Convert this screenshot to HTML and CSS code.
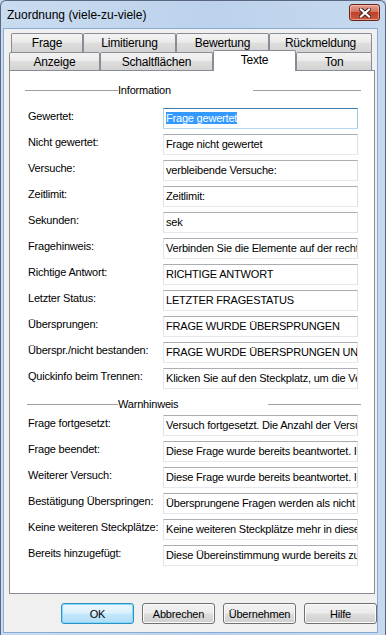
FILE: index.html
```html
<!DOCTYPE html>
<html lang="de">
<head>
<meta charset="UTF-8" />
<title>Zuordnung (viele-zu-viele)</title>
<link rel="stylesheet" href="styles.css">
</head>
<body>

<div class="window">
  <div class="titlebar">
    <span class="title">Zuordnung (viele-zu-viele)</span>
    <button class="close" aria-label="Schließen">
      <svg width="12" height="10" viewBox="0 0 12 10">
        <path d="M2 1.5 L10 8.5 M10 1.5 L2 8.5" stroke="#40201a" stroke-width="4" stroke-linecap="square" fill="none" />
        <path d="M2 1.5 L10 8.5 M10 1.5 L2 8.5" stroke="#fff" stroke-width="2.2" stroke-linecap="square" fill="none" />
      </svg>
    </button>
  </div>

  <div class="client">
    <div class="tabs">
      <div class="tab-row back">
        <div class="tab t-frage">Frage</div>
        <div class="tab t-limit">Limitierung</div>
        <div class="tab t-bewert">Bewertung</div>
        <div class="tab t-rueck">Rückmeldung</div>
      </div>
      <div class="tab-row front">
        <div class="tab t-anzeige">Anzeige</div>
        <div class="tab t-schalt">Schaltflächen</div>
        <div class="tab t-texte active">Texte</div>
        <div class="tab t-ton">Ton</div>
      </div>
    </div>

    <div class="panel">
      <div class="group-head info">
        <span class="rule lead"></span>
        <span class="caption">Information</span>
        <span class="rule"></span>
      </div>
      <div class="rows first">
        <div class="row"><span class="label">Gewertet:</span><div class="field focused"><span class="sel">Frage gewertet</span></div></div>
        <div class="row"><span class="label">Nicht gewertet:</span><div class="field">Frage nicht gewertet</div></div>
        <div class="row"><span class="label">Versuche:</span><div class="field">verbleibende Versuche:</div></div>
        <div class="row"><span class="label">Zeitlimit:</span><div class="field">Zeitlimit:</div></div>
        <div class="row"><span class="label">Sekunden:</span><div class="field">sek</div></div>
        <div class="row"><span class="label">Fragehinweis:</span><div class="field">Verbinden Sie die Elemente auf der rechten Seite</div></div>
        <div class="row"><span class="label">Richtige Antwort:</span><div class="field">RICHTIGE ANTWORT</div></div>
        <div class="row"><span class="label">Letzter Status:</span><div class="field">LETZTER FRAGESTATUS</div></div>
        <div class="row"><span class="label">Übersprungen:</span><div class="field">FRAGE WURDE ÜBERSPRUNGEN</div></div>
        <div class="row"><span class="label">Überspr./nicht bestanden:</span><div class="field">FRAGE WURDE ÜBERSPRUNGEN UND NICHT BESTANDEN</div></div>
        <div class="row"><span class="label">Quickinfo beim Trennen:</span><div class="field">Klicken Sie auf den Steckplatz, um die Verbindung zu trennen</div></div>
      </div>

      <div class="group-head warn">
        <span class="rule lead"></span>
        <span class="caption">Warnhinweis</span>
        <span class="rule"></span>
      </div>
      <div class="rows second">
        <div class="row"><span class="label">Frage fortgesetzt:</span><div class="field">Versuch fortgesetzt. Die Anzahl der Versuche</div></div>
        <div class="row"><span class="label">Frage beendet:</span><div class="field">Diese Frage wurde bereits beantwortet. Ihre</div></div>
        <div class="row"><span class="label">Weiterer Versuch:</span><div class="field">Diese Frage wurde bereits beantwortet. Ihre</div></div>
        <div class="row"><span class="label">Bestätigung Überspringen:</span><div class="field">Übersprungene Fragen werden als nicht beantwortet</div></div>
        <div class="row"><span class="label">Keine weiteren Steckplätze:</span><div class="field">Keine weiteren Steckplätze mehr in dieser Frage</div></div>
        <div class="row"><span class="label">Bereits hinzugefügt:</span><div class="field">Diese Übereinstimmung wurde bereits zugeordnet</div></div>
      </div>
    </div>

    <div class="buttons">
      <button class="btn default">OK</button>
      <button class="btn">Abbrechen</button>
      <button class="btn">Übernehmen</button>
      <button class="btn">Hilfe</button>
    </div>
  </div>
</div>

</body>
</html>
```

FILE: styles.css
```css
body {
  margin: 0;
  background: #c4d8ee;
  font-family: 'Liberation Sans', Arial, sans-serif;
  font-size: 11px;
  color: #000;
}
.window {
  width: 386px;
  height: 635px;
  box-sizing: border-box;
  border: 1px solid #59687e;
  border-bottom: none;
  border-radius: 6px 6px 0 0;
  padding: 0 7px 2px 2px;
  background: linear-gradient(to right, #c9dbef, #bcd2ec 55%, #c6d9ee);
  display: flex;
  flex-direction: column;
}
.titlebar {
  height: 27px;
  display: flex;
  align-items: center;
  padding-left: 4px;
}
.title {
  font-size: 12px;
}
.close {
  margin: 3px -2px 0 auto;
  align-self: flex-start;
  width: 31px;
  height: 17px;
  padding: 0;
  border: 1px solid #6a2417;
  border-radius: 3px;
  background: linear-gradient(#e5a293, #d4725f 45%, #c0402a 50%, #c95a3f);
  box-shadow: inset 0 0 0 1px rgba(255, 220, 210, 0.5);
  display: flex;
  align-items: center;
  justify-content: center;
}
.close svg {
  display: block;
}

.client {
  flex: 1;
  background: #f0f0f0;
  border: 1px solid #86abd6;
  padding: 4px 0 0 5px;
  display: flex;
  flex-direction: column;
}

/* tabs */
.tab-row {
  display: flex;
  align-items: flex-start;
}
.tab-row.back {
  margin-left: 2px;
}
.tab-row.front {
  margin-top: -2px;
}
.tab {
  box-sizing: border-box;
  border: 1px solid #898c95;
  border-bottom: none;
  border-radius: 2px 2px 0 0;
  background: linear-gradient(#f3f3f3, #ebebeb 45%, #dedede 50%, #d3d3d3);
  display: flex;
  align-items: center;
  justify-content: center;
  font-size: 12px;
  letter-spacing: -0.2px;
  height: 19px;
}
.tab-row.front .tab {
  height: 18px;
  margin-top: 2px;
}
.tab-row.front .tab.active {
  position: relative;
  z-index: 1;
  margin-top: 0;
  height: 21px;
  padding-bottom: 2px;
  background: #fff;
}
.t-frage { width: 72px; }
.t-limit { width: 93px; }
.t-bewert { width: 93px; }
.t-rueck { width: 103px; }
.t-anzeige { width: 91px; }
.t-schalt { width: 113px; }
.t-texte { width: 83px; }
.t-ton { width: 76px; }

/* panel */
.panel {
  width: 366px;
  height: 524px;
  box-sizing: border-box;
  margin-top: -1px;
  border: 1px solid #898c95;
  background: #fff;
  padding: 13px 16px 0 18px;
  letter-spacing: -0.2px;
}
.group-head {
  display: flex;
  align-items: center;
  height: 13px;
  margin: 0 -3px;
}
.group-head .caption {
  line-height: 13px;
}
.rule {
  height: 1px;
  flex: 1;
  background: #a0a0a0;
}
.info .lead { flex: none; width: 93px; }
.info .caption { width: 135px; }
.warn { margin-left: -1px; }
.warn .lead { flex: none; width: 91px; }
.warn .caption { width: 150px; }

.rows {
  display: flex;
  flex-direction: column;
  gap: 5px;
}
.rows.first {
  margin-top: 11px;
}
.group-head.warn {
  margin-top: 9px;
}
.rows.second {
  margin-top: 4px;
}
.row {
  display: flex;
  height: 21px;
}
.label {
  width: 135px;
  flex: none;
  padding-top: 2px;
  line-height: 13px;
  white-space: nowrap;
}
.field {
  box-sizing: border-box;
  width: 195px;
  flex: none;
  height: 21px;
  border: 1px solid;
  border-color: #abadb3 #dbdfe6 #e3e9ef #e2e3ea;
  padding: 0 2px;
  line-height: 19px;
  white-space: nowrap;
  overflow: hidden;
}
.field.focused {
  border-color: #3d7bad #a4c9e3 #b7d9ed #b5cfe7;
}
.sel {
  background: #3399ff;
  color: #fff;
}

/* buttons */
.buttons {
  margin-top: 9px;
  width: 368px;
  display: flex;
  justify-content: flex-end;
  gap: 8px;
}
.btn {
  width: 73px;
  height: 21px;
  padding: 0;
  border: 1px solid #707070;
  border-radius: 3px;
  background: linear-gradient(#f2f2f2, #ebebeb 48%, #dddddd 52%, #cfcfcf);
  box-shadow: inset 0 0 0 1px #fbfbfb;
  font-family: 'Liberation Sans', Arial, sans-serif;
  font-size: 11px;
  letter-spacing: -0.2px;
  color: #000;
}
.btn.default {
  border-color: #2f8fc6;
  background: linear-gradient(#eaf6fd, #dcf1fc 48%, #c4e7fb 52%, #b0dcf5);
  box-shadow: inset 0 0 0 1px #7fdcf9;
}
```
